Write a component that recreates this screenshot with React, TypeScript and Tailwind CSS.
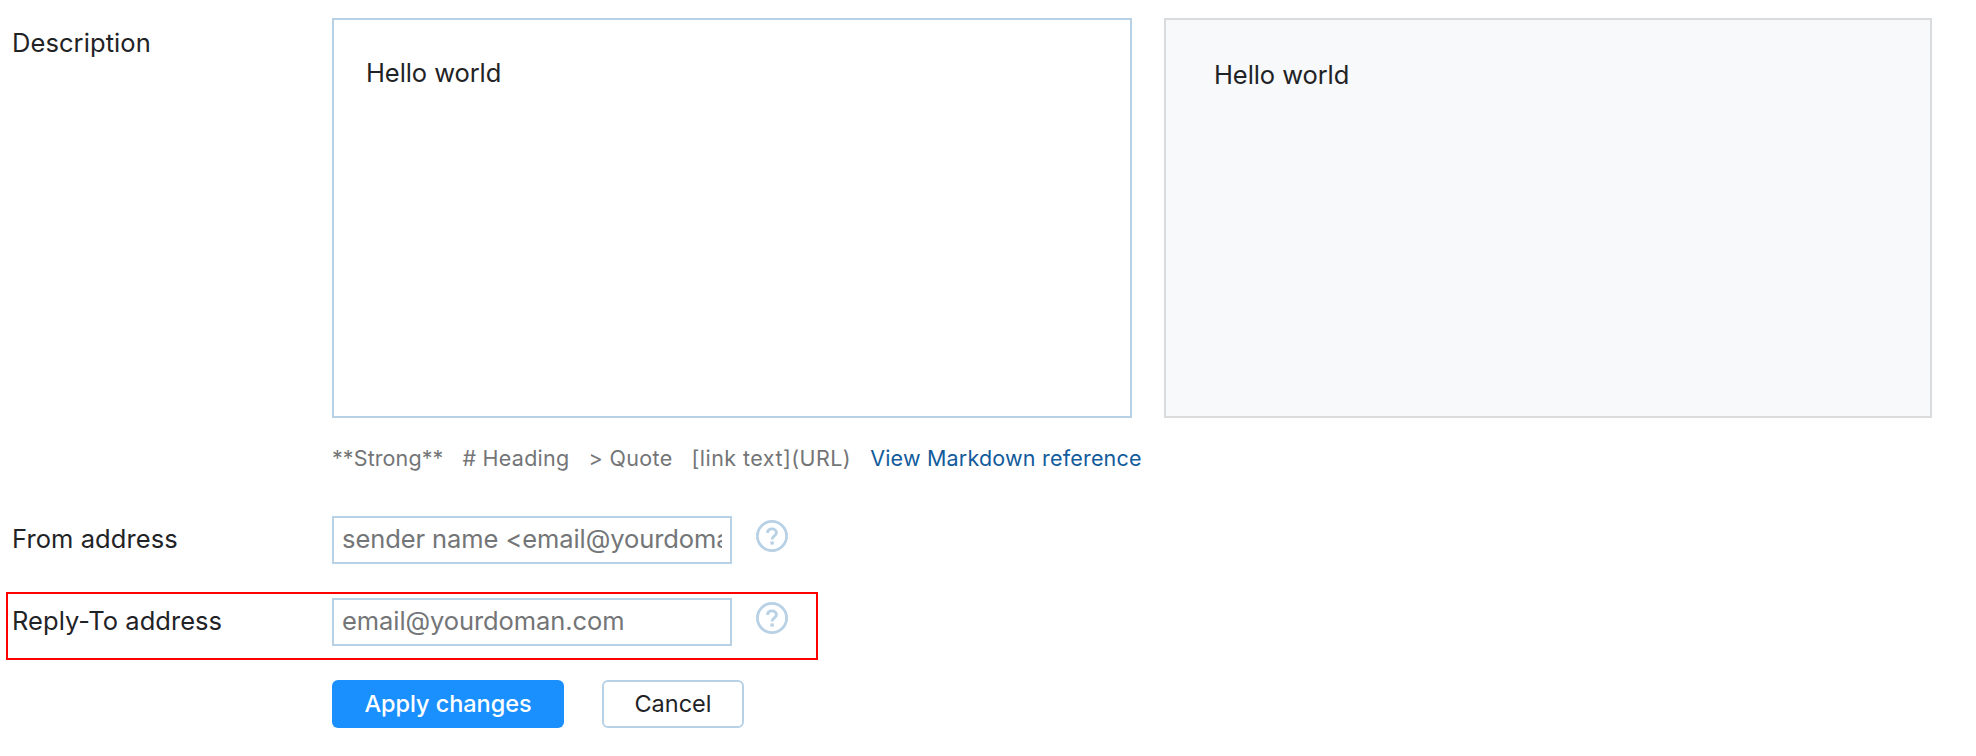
function HelpIcon() {
  return (
    <svg className="ml-6 mt-1 size-8 shrink-0" viewBox="0 0 32 32" fill="none" stroke="#b8d1e5" role="img" aria-label="Help">
      <circle cx="16" cy="16" r="14.6" strokeWidth="2.8" />
      <path d="M11.6 13c0-2.5 1.8-4.1 4.4-4.1s4.4 1.6 4.4 3.9c0 3.2-4.3 3.2-4.3 6.8" strokeWidth="2.9" />
      <rect x="14.4" y="21.4" width="3.4" height="3.2" fill="#b8d1e5" stroke="none" />
    </svg>
  );
}

function Field({ placeholder }: { placeholder: string }) {
  return (
    <input
      type="text"
      placeholder={placeholder}
      className="h-12 w-[400px] shrink-0 rounded-none border-2 border-[#b8d1e5] bg-white px-2 pb-[3px] text-[25.5px] tracking-[-0.08px] text-[#1f2326] outline-none placeholder:text-[#737577]"
    />
  );
}

const hints = [
  { text: "**Strong**", tracking: "tracking-[0.1px]" },
  { text: "# Heading", tracking: "tracking-[0.25px]" },
  { text: "> Quote", tracking: "tracking-[0.35px]" },
  { text: "[link text](URL)", tracking: "tracking-[0.45px]" },
];

export default function App() {
  return (
    <form className="flex h-[756px] w-[1976px] flex-col overflow-hidden bg-white pt-[18px] font-['Inter',sans-serif] text-[25.5px] leading-8 text-[#1f2326]">
      <div className="flex h-[400px]">
        <label htmlFor="description" className="w-[332px] shrink-0 pl-3 pt-[9px] tracking-[0.08px]">Description</label>
        <textarea
          id="description"
          defaultValue="Hello world"
          className="w-[800px] shrink-0 resize-none rounded-none border-2 border-[#b8d1e5] bg-white px-8 pt-[37px] tracking-[-0.08px] outline-none"
        />
        <div className="ml-8 w-[768px] shrink-0 border-2 border-[#d9dbdd] bg-[#f7f9fb] px-12 pt-[39px] tracking-[-0.08px]">Hello world</div>
      </div>
      <div className="mt-6 flex h-8 items-center gap-[19px] pl-[332px] text-[21.5px] text-[#737577]">
        {hints.map((hint) => (
          <span key={hint.text} className={`whitespace-nowrap ${hint.tracking}`}>{hint.text}</span>
        ))}
        <a className="whitespace-nowrap tracking-[0.2px] text-[#125c9c]">View Markdown reference</a>
      </div>
      <div className="mt-[42px] flex h-12">
        <label className="w-[332px] shrink-0 pl-3 pt-[7px] tracking-[0.08px]">From address</label>
        <Field placeholder="sender name <email@yourdomain.com>" />
        <HelpIcon />
      </div>
      <div className="ml-1.5 mt-7 flex h-[68px] w-[812px] border-2 border-[#ff0000] pt-1">
        <label className="w-[324px] shrink-0 pl-1 pt-[7px] tracking-[0.04px]">Reply-To address</label>
        <Field placeholder="email@yourdoman.com" />
        <HelpIcon />
      </div>
      <div className="mt-5 flex h-12 pl-[332px] text-[23.5px]">
        <button type="button" className="w-[232px] rounded-md bg-[#1a90ff] font-medium tracking-[-0.05px] text-white">Apply changes</button>
        <button type="button" className="ml-[38px] w-[142px] rounded-md border-2 border-[#b8d1e5] bg-white">Cancel</button>
      </div>
    </form>
  );
}
